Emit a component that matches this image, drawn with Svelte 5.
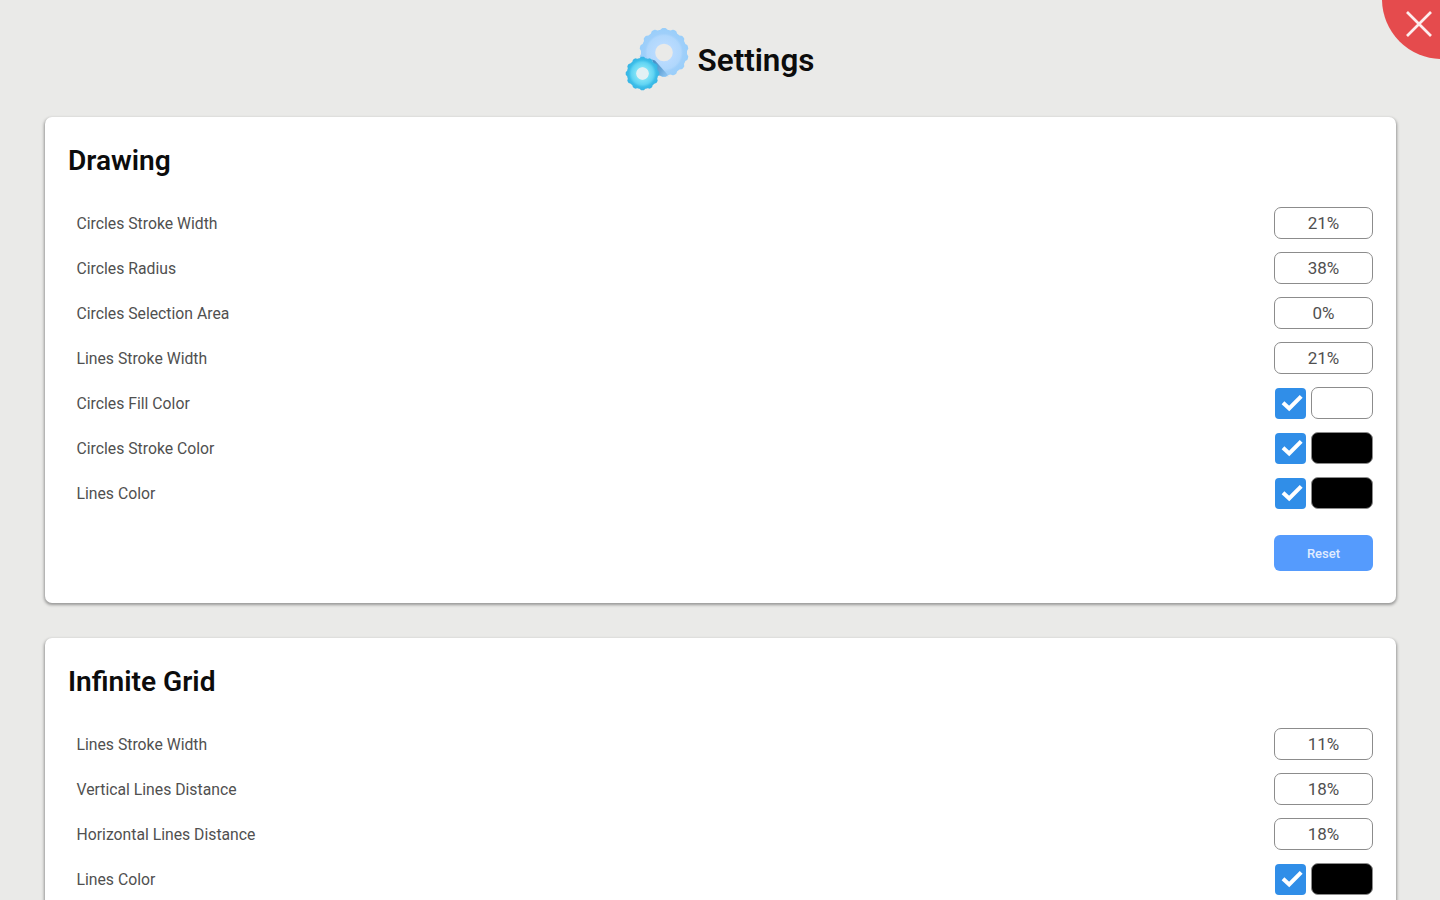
<script>
  const sections = [
    {
      title: 'Drawing',
      rows: [
        { label: 'Circles Stroke Width', value: '21%' },
        { label: 'Circles Radius', value: '38%' },
        { label: 'Circles Selection Area', value: '0%' },
        { label: 'Lines Stroke Width', value: '21%' },
        { label: 'Circles Fill Color', color: '#ffffff' },
        { label: 'Circles Stroke Color', color: '#000000' },
        { label: 'Lines Color', color: '#000000' }
      ]
    },
    {
      title: 'Infinite Grid',
      rows: [
        { label: 'Lines Stroke Width', value: '11%' },
        { label: 'Vertical Lines Distance', value: '18%' },
        { label: 'Horizontal Lines Distance', value: '18%' },
        { label: 'Lines Color', color: '#000000' }
      ]
    }
  ];

  // Outline of a gear with soft teeth around (cx, cy).
  function gear(cx, cy, r, depth, teeth) {
    const points = [];
    for (let i = 0; i < 240; i++) {
      const a = (i / 240) * Math.PI * 2;
      const wave = Math.max(-1, Math.min(1, 1.7 * Math.cos(a * teeth)));
      const d = r + depth * wave;
      points.push(`${(cx + d * Math.sin(a)).toFixed(2)} ${(cy - d * Math.cos(a)).toFixed(2)}`);
    }
    return `M${points.join('L')}Z`;
  }
  const hole = (cx, cy, r) =>
    `M${cx - r} ${cy}a${r} ${r} 0 1 0 ${2 * r} 0a${r} ${r} 0 1 0 ${-2 * r} 0Z`;

  const bigGear = gear(40, 26.5, 23.8, 0.8, 14) + hole(40, 26.5, 8.8);
  const smallGear = gear(18.5, 47.5, 16.2, 0.6, 12) + hole(18.5, 47.5, 6);
</script>

<main>
  <button class="close" aria-label="Close">
    <svg width="28" height="28" viewBox="0 0 28 28"><path d="M2 2L26 26M26 2L2 26" /></svg>
  </button>

  <header>
    <svg class="gears" width="66" height="66" viewBox="0 0 66 66">
      <defs>
        <radialGradient id="big" gradientUnits="userSpaceOnUse" cx="40" cy="26.5" r="25">
          <stop offset="0.35" stop-color="#b9dbff" />
          <stop offset="0.67" stop-color="#b0d7fc" />
          <stop offset="0.76" stop-color="#9fcffa" />
          <stop offset="1" stop-color="#98cefa" />
        </radialGradient>
        <radialGradient id="small" gradientUnits="userSpaceOnUse" cx="18.5" cy="47.5" r="17">
          <stop offset="0.35" stop-color="#83e4f7" />
          <stop offset="0.65" stop-color="#61d4f3" />
          <stop offset="0.8" stop-color="#3cbde8" />
          <stop offset="1" stop-color="#37b3e4" />
        </radialGradient>
        <linearGradient id="shade" gradientUnits="userSpaceOnUse" x1="29" y1="38" x2="46" y2="49">
          <stop offset="0" stop-color="#4a91c7" />
          <stop offset="0.5" stop-color="#5d9fd4" stop-opacity="0.85" />
          <stop offset="1" stop-color="#7cb8e8" stop-opacity="0.3" />
        </linearGradient>
      </defs>
      <path d={bigGear} fill="url(#big)" fill-rule="evenodd" />
      <path d="M28 33.5L31 34.5L45 50.2L38 50.6L33 49Z" fill="url(#shade)" />
      <path d={smallGear} fill="url(#small)" fill-rule="evenodd" />
      <circle cx="18.5" cy="47.5" r="6.2" fill="#e3f1f4" />
    </svg>
    <h1>Settings</h1>
  </header>

  {#each sections as section, index}
    <section>
      <h2>{section.title}</h2>
      <div class="rows">
        {#each section.rows as row}
          <div class="row">
            <span class="label">{row.label}</span>
            {#if row.value}
              <span class="value">{row.value}</span>
            {:else}
              <span class="color">
                <span class="check">
                  <svg width="31" height="31" viewBox="0 0 31 31"><path d="M8 14.7L14.2 20.5L26.2 8.3" /></svg>
                </span>
                <span class="swatch" style="background:{row.color}"></span>
              </span>
            {/if}
          </div>
        {/each}
      </div>
      {#if index === 0}
        <button class="reset">Reset</button>
      {/if}
    </section>
  {/each}
</main>

<style>
  :global(body) {
    background: #eaeae8;
    overflow: hidden;
  }
  main {
    position: relative;
    height: 900px;
    overflow: hidden;
    box-sizing: border-box;
    padding: 0 44px 0 45px;
    background: #eaeae8;
    color: #0c0c0c;
    font-family: Roboto, sans-serif;
  }
  button {
    border: 0;
    padding: 0;
    font-family: inherit;
  }
  .close {
    position: absolute;
    top: -61px;
    right: -62px;
    width: 120px;
    height: 120px;
    border-radius: 50%;
    background: #e54b4d;
  }
  .close svg {
    position: absolute;
    left: 23px;
    top: 71px;
  }
  .close path {
    fill: none;
    stroke: #fdeeee;
    stroke-width: 2.7;
  }
  header {
    display: flex;
    align-items: center;
    justify-content: center;
    height: 117px;
    gap: 7.5px;
    padding-right: 2.5px;
  }
  h1,
  h2 {
    margin: 0;
    font-weight: 600;
  }
  h1 {
    font-size: 31.4px;
    line-height: 36px;
    padding-top: 5px;
  }
  h2 {
    font-size: 28.1px;
    line-height: 34px;
  }
  section {
    box-sizing: border-box;
    height: 486px;
    margin-bottom: 35px;
    padding: 27px 23px 0;
    border-radius: 7px;
    background: #fff;
    box-shadow: 0 1.5px 3px 0.5px rgba(0, 0, 0, 0.35);
    display: flex;
    flex-direction: column;
  }
  .rows {
    margin-top: 22.5px;
  }
  .row {
    display: flex;
    align-items: center;
    justify-content: space-between;
    height: 45px;
    padding-left: 8.5px;
  }
  .label {
    font-size: 15.75px;
    padding-top: 1px;
    color: #505050;
  }
  .value,
  .swatch {
    box-sizing: border-box;
    height: 32px;
    border: 1px solid #8c8c8c;
    border-radius: 7px;
  }
  .value {
    width: 99px;
    line-height: 31px;
    text-align: center;
    font-size: 17px;
    color: #505050;
  }
  .color {
    display: flex;
    align-items: flex-start;
    gap: 5px;
  }
  .check {
    width: 31px;
    height: 31px;
    margin-top: 0.5px;
    border-radius: 4px;
    background: #308ee8;
  }
  .check svg {
    display: block;
  }
  .check path {
    fill: none;
    stroke: #fff;
    stroke-width: 4;
  }
  .swatch {
    width: 62px;
  }
  .reset {
    align-self: flex-end;
    width: 99px;
    height: 36px;
    margin-top: 19px;
    border-radius: 6px;
    background: #559bfd;
    color: #e0ecff;
    font-size: 13px;
    line-height: 37px;
    font-weight: 500;
  }
</style>
